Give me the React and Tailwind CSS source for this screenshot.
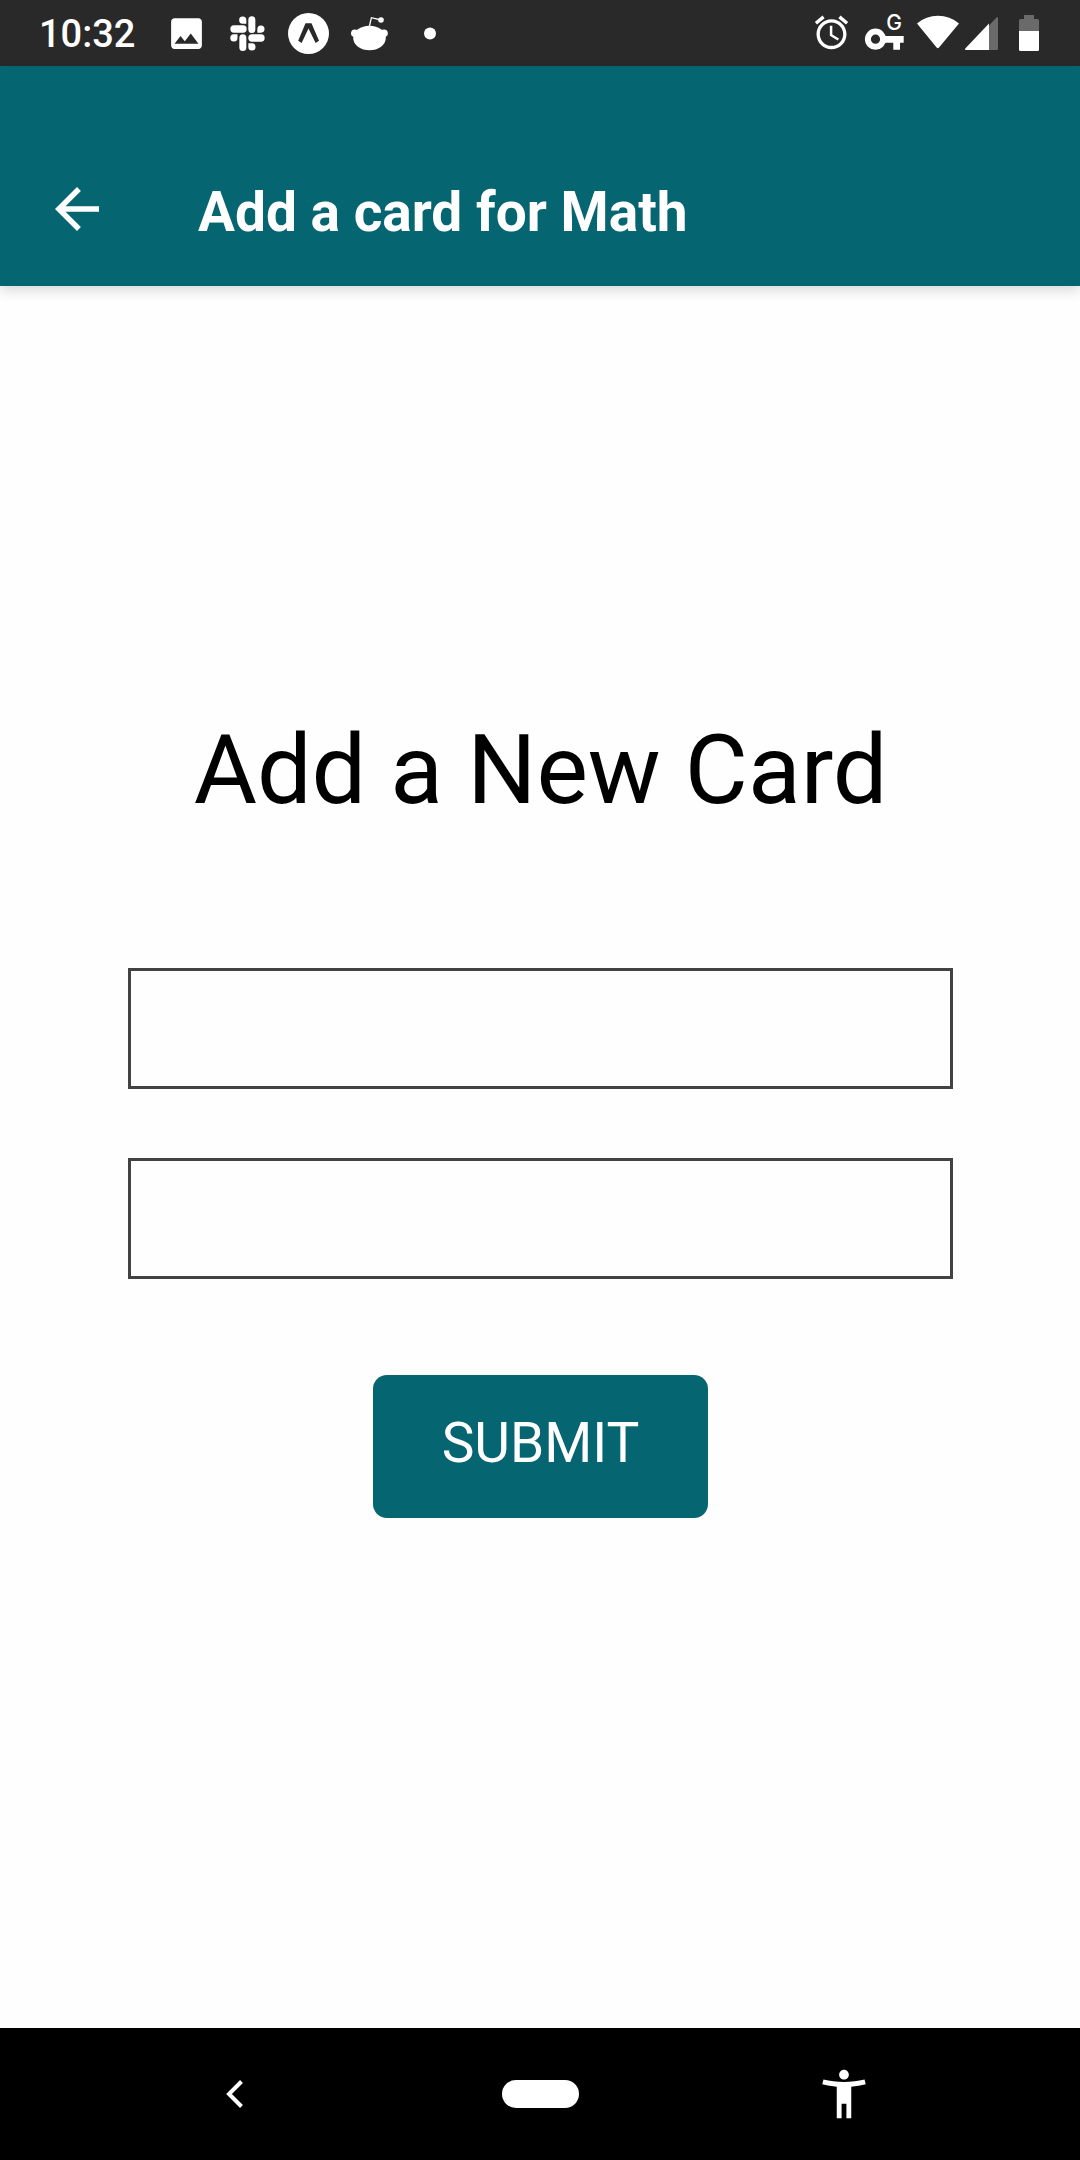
import React from "react";

function StatusBar() {
  return (
    <div className="flex h-[66px] items-center justify-between bg-[#292929] pr-[39px] pl-[39px] text-white">
      <div className="flex items-center gap-5">
        <span className="w-[107px] pt-0.5 text-[38px] leading-[46px] font-medium">10:32</span>
        <svg className="size-[41px]" viewBox="0 0 24 24" fill="currentColor" aria-hidden="true">
          <path d="M21 19V5c0-1.1-.9-2-2-2H5c-1.1 0-2 .9-2 2v14c0 1.1.9 2 2 2h14c1.1 0 2-.9 2-2zM8.5 13.5l2.5 3.01L14.5 12l4.5 6H5l3.5-4.5z" />
        </svg>
        <svg className="size-[41px]" viewBox="-9 -9 123 123" fill="currentColor" aria-hidden="true">
          <rect x="28" y="55" width="21" height="50" rx="10.5" />
          <rect x="55" y="1" width="21" height="50" rx="10.5" />
          <rect x="1" y="28" width="49" height="22" rx="11" />
          <rect x="55" y="55" width="49" height="22" rx="11" />
          <path d="M49 23H38.500a10.800 10.800 0 1 1 10.500-11z" />
          <path d="M82 50V39a10.800 10.800 0 1 1 11 11z" />
          <path d="M55 82h11a10.800 10.800 0 1 1-11 11z" />
          <path d="M22.500 55v11a10.800 10.800 0 1 1-11-11z" />
        </svg>
        <svg className="size-[41px]" viewBox="0 0 41 41" aria-hidden="true">
          <circle cx="20.5" cy="20.5" r="20.5" fill="#fff" />
          <path d="M17.5 10.3h6L31 27.8l-3.4 2.2-7.1-14.5L13.6 30l-3.4-2.2z" fill="#292929" />
        </svg>
        <svg className="size-[41px]" viewBox="0 0 41 41" fill="#fff" aria-hidden="true">
          <ellipse cx="20.5" cy="25" rx="16.3" ry="12.2" />
          <circle cx="5.8" cy="20.3" r="3.8" />
          <circle cx="35" cy="20.3" r="3.8" />
          <path d="M20.2 14 22.4 4.7 32 7" fill="none" stroke="#fff" strokeWidth="1.3" />
          <circle cx="32" cy="7" r="2.8" />
        </svg>
        <svg className="size-[41px]" viewBox="0 0 41 41" aria-hidden="true">
          <circle cx="20" cy="20.5" r="6" fill="#fff" />
        </svg>
      </div>
      <div className="flex items-center">
        <svg className="h-[66px] w-[53px]" viewBox="0 0 53 66" fill="#fff" aria-hidden="true">
          <path
            transform="translate(6.5 12.5) scale(1.667)"
            d="M22 5.72l-4.6-3.86-1.29 1.53 4.6 3.86L22 5.72zM7.88 3.39L6.6 1.86 2 5.71l1.29 1.53 4.59-3.85zM12.5 8H11v6l4.75 2.85.75-1.23-4-2.37V8zM12 4c-4.97 0-9 4.03-9 9s4.02 9 9 9c4.97 0 9-4.03 9-9s-4.03-9-9-9zm0 16c-3.87 0-7-3.13-7-7s3.13-7 7-7 7 3.13 7 7-3.13 7-7 7z"
          />
        </svg>
        <svg className="h-[66px] w-[53px]" viewBox="0 0 53 66" aria-hidden="true">
          <circle cx="17.5" cy="39.2" r="7.6" fill="none" stroke="#fff" strokeWidth="6" />
          <path d="M26 36h19.7v6.7h-3.7v7h-6.7v-7H26z" fill="#fff" />
          <text x="36" y="29.8" textAnchor="middle" fill="#fff" className="font-[Inter,sans-serif] text-[21px] font-medium">G</text>
        </svg>
        <svg className="h-[66px] w-[53px]" viewBox="0 0 53 66" aria-hidden="true">
          <path d="M6 23.4Q15 15.7 27 15.7T48 23.4L28 47.6q-1.3 1.4-2.4 0z" fill="#fff" />
        </svg>
        <svg className="h-[66px] w-[53px]" viewBox="0 0 53 66" aria-hidden="true">
          <path d="M25 25.5 32 18q2-2 2 .5V48.500q0 1.500-1.500 1.500H25z" fill="#6a6a6a" />
          <path d="M25 23.500V50H2.500q-2.500 0-1-1.800z" fill="#fff" />
        </svg>
        <svg className="h-[66px] w-6" viewBox="0 0 24 66" aria-hidden="true">
          <path d="M2 31V20.500Q2 19 3.500 19H7v-4h10v4h3.500Q22 19 22 20.500V31z" fill="#6a6a6a" />
          <path d="M2 31h20v18.500q0 1.500-1.500 1.500h-17Q2 51 2 49.500z" fill="#fff" />
        </svg>
      </div>
    </div>
  );
}

function Header() {
  return (
    <header className="bg-[#056571] pt-[66px] text-white shadow-[0_4px_12px_rgba(0,0,0,0.16)]">
      <div className="flex h-[154px] items-center gap-[88px] pl-11">
        <button type="button" aria-label="Back">
          <svg className="size-[66px]" viewBox="0 0 24 24" fill="currentColor" aria-hidden="true">
            <path d="M20 11H7.830l5.590-5.590L12 4l-8 8 8 8 1.410-1.410L7.830 13H20v-2z" />
          </svg>
        </button>
        <h1 className="pt-1.5 text-[55px] leading-[64px] font-bold">Add a card for Math</h1>
      </div>
    </header>
  );
}

function NewCardForm() {
  return (
    <form
      className="flex flex-1 flex-col items-center justify-center pr-[127px] pb-[82px] pl-32"
      onSubmit={(event) => event.preventDefault()}
    >
      <h2 className="text-[97px] leading-[112px] text-black">Add a New Card</h2>
      <div className="mt-[142px] flex w-full flex-col gap-[69px]">
        <input
          type="text"
          aria-label="Question"
          className="h-[121px] w-full border-3 border-[#434242] px-7 text-[38px] outline-none"
        />
        <input
          type="text"
          aria-label="Answer"
          className="h-[121px] w-full border-3 border-[#434242] px-7 text-[38px] outline-none"
        />
      </div>
      <button
        type="submit"
        className="mt-24 rounded-[14px] bg-[#056571] px-[69px] pt-9 pb-[43px] text-[55px] leading-[64px] text-white"
      >
        SUBMIT
      </button>
    </form>
  );
}

function NavigationBar() {
  return (
    <nav className="grid h-[132px] grid-cols-3 place-items-center bg-black px-[84px] text-white">
      <button type="button" aria-label="System back">
        <svg className="h-7 w-5" viewBox="0 0 20 28" aria-hidden="true">
          <path d="M15.500 1.500 3 14l12.500 12.500" fill="none" stroke="#fff" strokeWidth="4" />
        </svg>
      </button>
      <button type="button" aria-label="Home" className="h-7 w-[77px] rounded-full bg-white" />
      <button type="button" aria-label="Accessibility">
        <svg className="size-[58px]" viewBox="0 0 24 24" fill="currentColor" aria-hidden="true">
          <path d="M20.500 6c-2.610.7-5.670 1-8.500 1s-5.890-.3-8.500-1L3 8c1.860.5 4 .83 6 1v13h2v-6h2v6h2V9c2-.17 4.140-.5 6-1l-.5-2zM12 6c1.100 0 2-.9 2-2s-.9-2-2-2-2 .9-2 2 .9 2 2 2z" />
        </svg>
      </button>
    </nav>
  );
}

export default function App() {
  return (
    <div className="flex min-h-screen flex-col bg-[#fefefe] font-[Roboto,sans-serif]">
      <StatusBar />
      <Header />
      <NewCardForm />
      <NavigationBar />
    </div>
  );
}
